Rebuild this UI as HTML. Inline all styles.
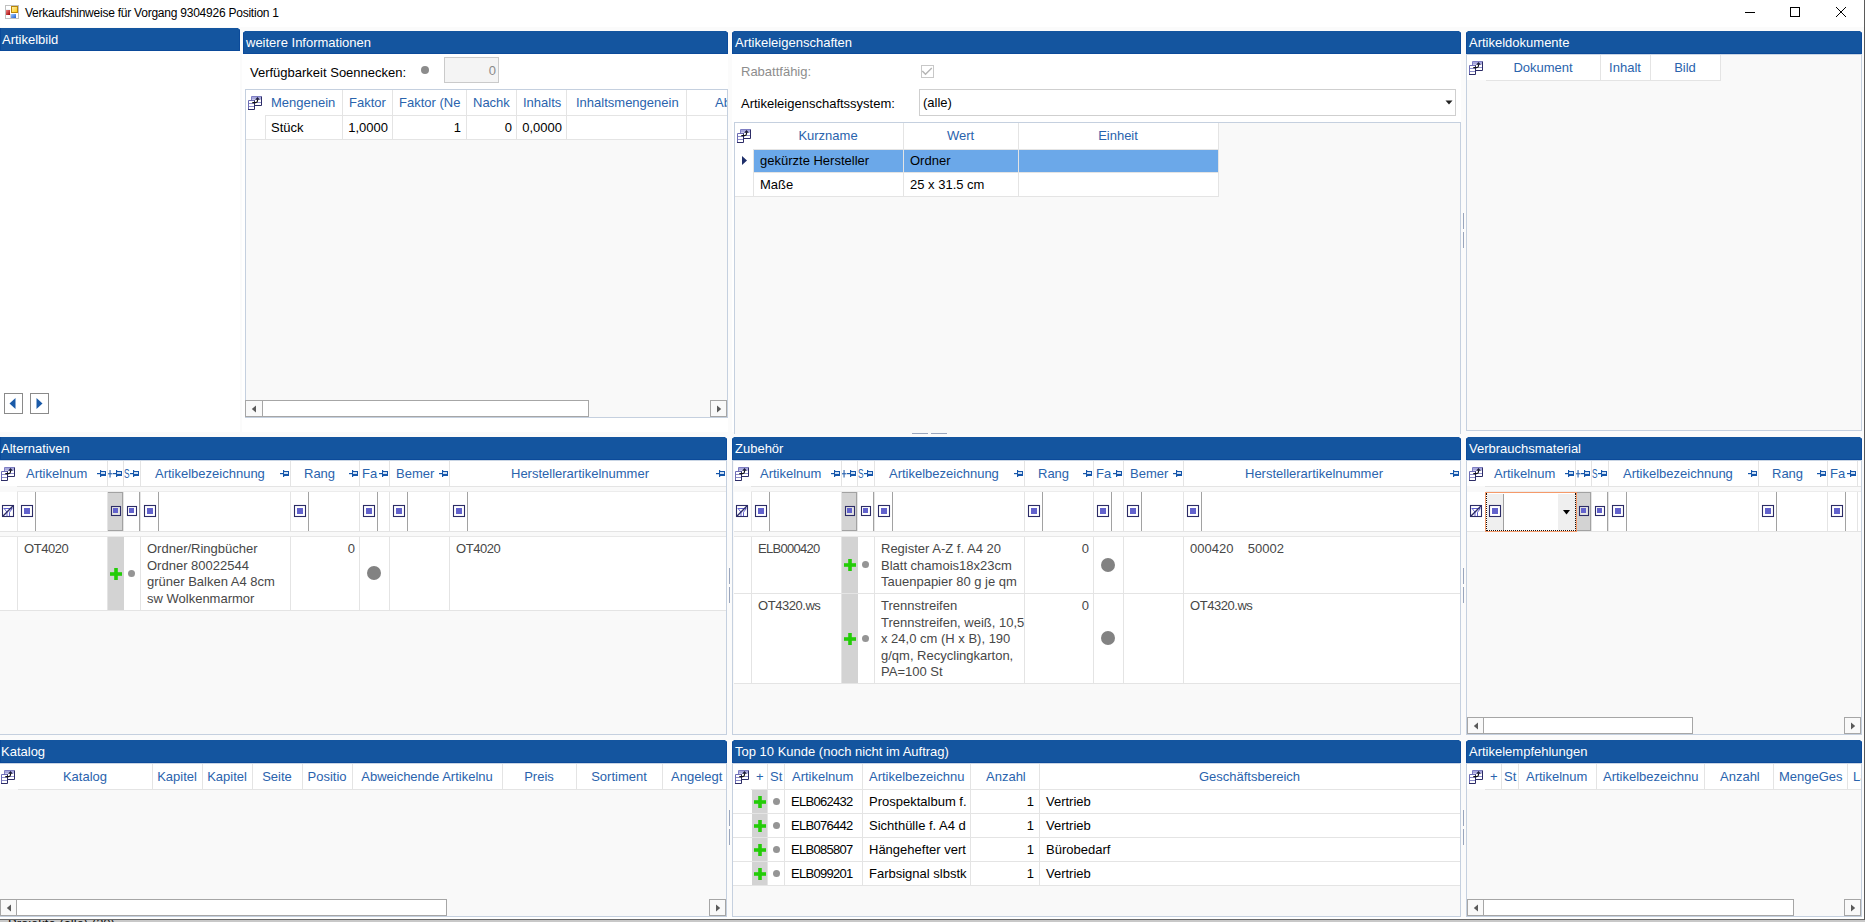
<!DOCTYPE html><html><head><meta charset="utf-8"><style>
html,body{margin:0;padding:0;width:1865px;height:922px;overflow:hidden;background:#fff;position:relative}
.a{position:absolute;box-sizing:content-box}
svg.a{overflow:visible}
.t{position:absolute;font-family:"Liberation Sans",sans-serif;font-size:13px;line-height:16px;white-space:pre}
</style></head><body>
<svg class="a" style="left:5px;top:5px" width="15" height="15" viewBox="0 0 15 15"><defs><linearGradient id="gy" x1="0" y1="0" x2="1" y2="1"><stop offset="0" stop-color="#fff4c0"/><stop offset="1" stop-color="#ffc800"/></linearGradient><linearGradient id="gr" x1="0" y1="0" x2="1" y2="1"><stop offset="0" stop-color="#f08080"/><stop offset="1" stop-color="#a00000"/></linearGradient><linearGradient id="gb" x1="0" y1="0" x2="1" y2="1"><stop offset="0" stop-color="#a0c8ff"/><stop offset="1" stop-color="#2060d0"/></linearGradient></defs><rect x="0.5" y="0.5" width="13" height="13" fill="#fff" stroke="#c0c0c0"/><line x1="5.5" y1="9" x2="5.5" y2="13" stroke="#d8d8d8"/><line x1="1" y1="5" x2="5" y2="5" stroke="#dde4ea"/><rect x="6.5" y="1.5" width="6" height="6" fill="url(#gy)" stroke="#b8860b"/><rect x="1" y="5" width="4" height="5" fill="url(#gr)"/><rect x="6" y="9" width="5" height="4" fill="url(#gb)"/></svg>
<div class="t" style="left:25px;top:5px;color:#000;font-size:12px;letter-spacing:-0.235px">Verkaufshinweise für Vorgang 9304926 Position 1</div>
<div class="a" style="left:1745px;top:12px;width:10px;height:1px;background:#000;"></div>
<div class="a" style="left:1790px;top:7px;width:8px;height:8px;border:1px solid #000"></div>
<svg class="a" style="left:1835px;top:6px" width="12" height="12" viewBox="0 0 12 12"><path d="M1 1 L11 11 M11 1 L1 11" stroke="#000" stroke-width="1"/></svg>
<div class="a" style="left:0px;top:27px;width:1865px;height:895px;background:#fbfbfb;"></div>
<div class="a" style="left:0px;top:51px;width:240px;height:381px;background:#fff;"></div>
<div class="a" style="left:0px;top:28px;width:240px;height:23px;background:#14559f;box-shadow:inset 0 -1px 0 #0b4a9a, inset 1px 0 0 #0b4a9a, inset -1px 0 0 #0b4a9a;clip-path:polygon(0 0,calc(100% - 2px) 0,100% 2px,100% 100%,0 100%)"></div>
<div class="t" style="left:2px;top:32px;color:#fff;font-size:13px;">Artikelbild</div>
<div class="a" style="left:4px;top:393px;width:17px;height:19px;border:1px solid #8a8a8a;background:#fff;"></div>
<div class="a" style="left:30px;top:393px;width:17px;height:19px;border:1px solid #8a8a8a;background:#fff;"></div>
<svg class="a" style="left:9px;top:398px" width="7" height="12" viewBox="0 0 7 12"><path d="M6.5 0 L6.5 11 L0.5 5.5 Z" fill="#1a5aa8"/></svg>
<svg class="a" style="left:36px;top:398px" width="7" height="12" viewBox="0 0 7 12"><path d="M0.5 0 L0.5 11 L6.5 5.5 Z" fill="#1a5aa8"/></svg>
<div class="a" style="left:242px;top:54px;width:486px;height:378px;background:#fff;"></div>
<div class="a" style="left:243px;top:31px;width:485px;height:23px;background:#14559f;box-shadow:inset 0 -1px 0 #0b4a9a, inset 1px 0 0 #0b4a9a, inset -1px 0 0 #0b4a9a;clip-path:polygon(2px 0,calc(100% - 2px) 0,100% 2px,100% 100%,0 100%,0 2px)"></div>
<div class="t" style="left:246px;top:35px;color:#fff;font-size:13px;">weitere Informationen</div>
<div class="t" style="left:250px;top:65px;color:#000;font-size:13px;">Verfügbarkeit Soennecken:</div>
<div class="a" style="left:421px;top:66px;width:8px;height:8px;border-radius:50%;background:#8c8c8c"></div>
<div class="a" style="left:444px;top:57px;width:53px;height:24px;border:1px solid #cacaca;background:#f4f4f4;"></div>
<div class="t" style="right:1369px;top:63px;color:#8a8a8a;font-size:13px;text-align:right;">0</div>
<div class="a" style="left:245px;top:89px;width:481px;height:327px;border:1px solid #c5d0df;background:#f9f9f9;"></div>
<div class="a" style="left:246px;top:90px;width:481px;height:25px;background:#fff;"></div>
<div class="a" style="left:246px;top:115px;width:481px;height:24px;background:#fff;"></div>
<div class="a" style="left:265px;top:115px;width:462px;height:1px;background:#e4e4e4;"></div>
<div class="a" style="left:246px;top:139px;width:481px;height:1px;background:#e4e4e4;"></div>
<div class="a" style="left:342px;top:90px;width:1px;height:49px;background:#e4e4e4;"></div>
<div class="a" style="left:392px;top:90px;width:1px;height:49px;background:#e4e4e4;"></div>
<div class="a" style="left:466px;top:90px;width:1px;height:49px;background:#e4e4e4;"></div>
<div class="a" style="left:516px;top:90px;width:1px;height:49px;background:#e4e4e4;"></div>
<div class="a" style="left:566px;top:90px;width:1px;height:49px;background:#e4e4e4;"></div>
<div class="a" style="left:686px;top:90px;width:1px;height:49px;background:#e4e4e4;"></div>
<div class="a" style="left:265px;top:115px;width:1px;height:24px;background:#e4e4e4;"></div>
<svg class="a" style="left:248px;top:96px" width="15" height="15" viewBox="0 0 15 15"><rect x="3" y="0" width="11" height="10" fill="#fff"/><rect x="4" y="1" width="9" height="2.6" fill="#a8a8dc"/><path d="M3.5 10 V0.5 H13.5" fill="none" stroke="#7d7dc2"/><path d="M13.5 0.5 V9.5 H3" fill="none" stroke="#2c2c66"/><line x1="4" y1="6.5" x2="13" y2="6.5" stroke="#9292d2"/><rect x="0" y="4" width="7" height="10" fill="#fff"/><path d="M0.5 14 V4.5 H7" fill="none" stroke="#6c6cb4"/><path d="M6.5 4.5 V13.5 H0" fill="none" stroke="#2c2c66"/><line x1="1" y1="7.5" x2="6" y2="7.5" stroke="#8c8cc8"/><line x1="1" y1="10.5" x2="6" y2="10.5" stroke="#8c8cc8"/><path d="M4.3 6.6 H7.6 Q9.5 6.6 9.5 4.8 V3.2" fill="none" stroke="#111" stroke-width="1.15"/><path d="M7.1 3.7 L9.5 0.9 L11.9 3.7 Z" fill="#1a1a3a"/></svg>
<div class="t" style="left:271px;top:95px;color:#2a63ad;font-size:13px;">Mengenein</div>
<div class="t" style="left:349px;top:95px;color:#2a63ad;font-size:13px;">Faktor</div>
<div class="t" style="left:399px;top:95px;color:#2a63ad;font-size:13px;">Faktor (Ne</div>
<div class="t" style="left:473px;top:95px;color:#2a63ad;font-size:13px;">Nachk</div>
<div class="t" style="left:523px;top:95px;color:#2a63ad;font-size:13px;">Inhalts</div>
<div class="t" style="left:576px;top:95px;color:#2a63ad;font-size:13px;">Inhaltsmengenein</div>
<div class="a" style="left:687px;top:90px;width:40px;height:25px;overflow:hidden"><div class="t" style="left:28px;top:5px;color:#2a63ad">Abmessung</div></div>
<div class="t" style="left:271px;top:120px;color:#000;font-size:13px;">Stück</div>
<div class="t" style="right:1477px;top:120px;color:#000;font-size:13px;text-align:right;">1,0000</div>
<div class="t" style="right:1404px;top:120px;color:#000;font-size:13px;text-align:right;">1</div>
<div class="t" style="right:1353px;top:120px;color:#000;font-size:13px;text-align:right;">0</div>
<div class="t" style="right:1303px;top:120px;color:#000;font-size:13px;text-align:right;">0,0000</div>
<div class="a" style="left:245px;top:400px;width:16px;height:15px;border:1px solid #a6a6a6;background:#f9f9f9;"></div>
<svg class="a" style="left:251.0px;top:404.5px" width="6" height="8" viewBox="0 0 6 8"><path d="M5 0.5 L5 7.5 L0.8 4 Z" fill="#5a5a5a"/></svg>
<div class="a" style="left:262px;top:400px;width:325px;height:15px;border:1px solid #a6a6a6;background:#fff;"></div>
<div class="a" style="left:710px;top:400px;width:15px;height:15px;border:1px solid #a6a6a6;background:#f9f9f9;"></div>
<svg class="a" style="left:715.5px;top:404.5px" width="6" height="8" viewBox="0 0 6 8"><path d="M1 0.5 L1 7.5 L5.2 4 Z" fill="#5a5a5a"/></svg>
<div class="a" style="left:732px;top:54px;width:729px;height:378px;background:#fff;"></div>
<div class="a" style="left:732px;top:31px;width:729px;height:23px;background:#14559f;box-shadow:inset 0 -1px 0 #0b4a9a, inset 1px 0 0 #0b4a9a, inset -1px 0 0 #0b4a9a;clip-path:polygon(2px 0,calc(100% - 2px) 0,100% 2px,100% 100%,0 100%,0 2px)"></div>
<div class="t" style="left:735px;top:35px;color:#fff;font-size:13px;">Artikeleigenschaften</div>
<div class="t" style="left:741px;top:64px;color:#8d8d8d;font-size:13px;">Rabattfähig:</div>
<div class="a" style="left:921px;top:65px;width:11px;height:11px;border:1px solid #c8c8c8;background:#fff;"></div>
<svg class="a" style="left:922px;top:66px" width="11" height="11" viewBox="0 0 11 11"><path d="M0.3 5 L3.5 8.3 L9.8 2" fill="none" stroke="#b4b4b4" stroke-width="1.4"/></svg>
<div class="t" style="left:741px;top:96px;color:#000;font-size:13px;">Artikeleigenschaftssystem:</div>
<div class="a" style="left:919px;top:89px;width:535px;height:25px;border:1px solid #cfcfcf;background:#fff;"></div>
<div class="t" style="left:923px;top:95px;color:#000;font-size:13px;">(alle)</div>
<svg class="a" style="left:1445px;top:100px" width="8" height="5" viewBox="0 0 8 5"><path d="M0.5 0.5 L7.5 0.5 L4 4.5 Z" fill="#222"/></svg>
<div class="a" style="left:734px;top:122px;width:725px;height:311px;border:1px solid #c5d0df;border-bottom:none;background:#f9f9f9"></div>
<div class="a" style="left:735px;top:123px;width:484px;height:26px;background:#fff;"></div>
<div class="a" style="left:735px;top:149px;width:484px;height:47px;background:#fff;"></div>
<div class="a" style="left:754px;top:150px;width:149px;height:22px;background:#6ba8e9;"></div>
<div class="a" style="left:904px;top:150px;width:114px;height:22px;background:#6ba8e9;"></div>
<div class="a" style="left:1019px;top:150px;width:199px;height:22px;background:#6ba8e9;"></div>
<div class="a" style="left:753px;top:149px;width:466px;height:1px;background:#e4e4e4;"></div>
<div class="a" style="left:753px;top:172px;width:466px;height:1px;background:#e4e4e4;"></div>
<div class="a" style="left:735px;top:196px;width:484px;height:1px;background:#e4e4e4;"></div>
<div class="a" style="left:753px;top:149px;width:1px;height:47px;background:#e4e4e4;"></div>
<div class="a" style="left:903px;top:123px;width:1px;height:73px;background:#e4e4e4;"></div>
<div class="a" style="left:1018px;top:123px;width:1px;height:73px;background:#e4e4e4;"></div>
<div class="a" style="left:1218px;top:123px;width:1px;height:74px;background:#e4e4e4;"></div>
<svg class="a" style="left:737px;top:129px" width="15" height="15" viewBox="0 0 15 15"><rect x="3" y="0" width="11" height="10" fill="#fff"/><rect x="4" y="1" width="9" height="2.6" fill="#a8a8dc"/><path d="M3.5 10 V0.5 H13.5" fill="none" stroke="#7d7dc2"/><path d="M13.5 0.5 V9.5 H3" fill="none" stroke="#2c2c66"/><line x1="4" y1="6.5" x2="13" y2="6.5" stroke="#9292d2"/><rect x="0" y="4" width="7" height="10" fill="#fff"/><path d="M0.5 14 V4.5 H7" fill="none" stroke="#6c6cb4"/><path d="M6.5 4.5 V13.5 H0" fill="none" stroke="#2c2c66"/><line x1="1" y1="7.5" x2="6" y2="7.5" stroke="#8c8cc8"/><line x1="1" y1="10.5" x2="6" y2="10.5" stroke="#8c8cc8"/><path d="M4.3 6.6 H7.6 Q9.5 6.6 9.5 4.8 V3.2" fill="none" stroke="#111" stroke-width="1.15"/><path d="M7.1 3.7 L9.5 0.9 L11.9 3.7 Z" fill="#1a1a3a"/></svg>
<div class="t" style="left:753px;width:150px;top:128px;color:#2a63ad;font-size:13px;text-align:center;">Kurzname</div>
<div class="t" style="left:903px;width:115px;top:128px;color:#2a63ad;font-size:13px;text-align:center;">Wert</div>
<div class="t" style="left:1018px;width:200px;top:128px;color:#2a63ad;font-size:13px;text-align:center;">Einheit</div>
<svg class="a" style="left:741px;top:156px" width="7" height="10" viewBox="0 0 7 10"><path d="M1 0 L1 9 L6 4.5 Z" fill="#1f2f6a"/></svg>
<div class="t" style="left:760px;top:153px;color:#000;font-size:13px;">gekürzte Hersteller</div>
<div class="t" style="left:910px;top:153px;color:#000;font-size:13px;">Ordner</div>
<div class="t" style="left:760px;top:177px;color:#000;font-size:13px;">Maße</div>
<div class="t" style="left:910px;top:177px;color:#000;font-size:13px;">25 x 31.5 cm</div>
<div class="a" style="left:912px;top:433px;width:16px;height:1px;background:#9aa6bd;"></div>
<div class="a" style="left:931px;top:433px;width:16px;height:1px;background:#9aa6bd;"></div>
<div class="a" style="left:1466px;top:54px;width:394px;height:376px;border:1px solid #c5d0df;border-top:none;background:#f9f9f9"></div>
<div class="a" style="left:1466px;top:31px;width:396px;height:23px;background:#14559f;box-shadow:inset 0 -1px 0 #0b4a9a, inset 1px 0 0 #0b4a9a, inset -1px 0 0 #0b4a9a;clip-path:polygon(2px 0,calc(100% - 2px) 0,100% 2px,100% 100%,0 100%,0 2px)"></div>
<div class="t" style="left:1469px;top:35px;color:#fff;font-size:13px;">Artikeldokumente</div>
<div class="a" style="left:1467px;top:54px;width:253px;height:26px;background:#fff;"></div>
<div class="a" style="left:1486px;top:80px;width:235px;height:1px;background:#e4e4e4;"></div>
<div class="a" style="left:1600px;top:54px;width:1px;height:26px;background:#e4e4e4;"></div>
<div class="a" style="left:1650px;top:54px;width:1px;height:26px;background:#e4e4e4;"></div>
<div class="a" style="left:1720px;top:54px;width:1px;height:27px;background:#e4e4e4;"></div>
<svg class="a" style="left:1469px;top:61px" width="15" height="15" viewBox="0 0 15 15"><rect x="3" y="0" width="11" height="10" fill="#fff"/><rect x="4" y="1" width="9" height="2.6" fill="#a8a8dc"/><path d="M3.5 10 V0.5 H13.5" fill="none" stroke="#7d7dc2"/><path d="M13.5 0.5 V9.5 H3" fill="none" stroke="#2c2c66"/><line x1="4" y1="6.5" x2="13" y2="6.5" stroke="#9292d2"/><rect x="0" y="4" width="7" height="10" fill="#fff"/><path d="M0.5 14 V4.5 H7" fill="none" stroke="#6c6cb4"/><path d="M6.5 4.5 V13.5 H0" fill="none" stroke="#2c2c66"/><line x1="1" y1="7.5" x2="6" y2="7.5" stroke="#8c8cc8"/><line x1="1" y1="10.5" x2="6" y2="10.5" stroke="#8c8cc8"/><path d="M4.3 6.6 H7.6 Q9.5 6.6 9.5 4.8 V3.2" fill="none" stroke="#111" stroke-width="1.15"/><path d="M7.1 3.7 L9.5 0.9 L11.9 3.7 Z" fill="#1a1a3a"/></svg>
<div class="t" style="left:1486px;width:114px;top:60px;color:#2a63ad;font-size:13px;text-align:center;">Dokument</div>
<div class="t" style="left:1600px;width:50px;top:60px;color:#2a63ad;font-size:13px;text-align:center;">Inhalt</div>
<div class="t" style="left:1650px;width:70px;top:60px;color:#2a63ad;font-size:13px;text-align:center;">Bild</div>
<div class="a" style="left:0px;top:437px;width:727px;height:23px;background:#14559f;box-shadow:inset 0 -1px 0 #0b4a9a, inset 1px 0 0 #0b4a9a, inset -1px 0 0 #0b4a9a;clip-path:polygon(0 0,calc(100% - 2px) 0,100% 2px,100% 100%,0 100%)"></div>
<div class="t" style="left:1px;top:441px;color:#fff;font-size:13px;">Alternativen</div>
<div class="a" style="left:-1px;top:460px;width:726px;height:274px;border:1px solid #c5d0df;border-top:none;background:#f9f9f9"></div>
<div class="a" style="left:0px;top:460px;width:726px;height:26px;background:#fff;"></div>
<div class="a" style="left:17px;top:486px;width:709px;height:1px;background:#e4e4e4;"></div>
<div class="a" style="left:107px;top:460px;width:1px;height:26px;background:#e4e4e4;"></div>
<div class="a" style="left:123px;top:460px;width:1px;height:26px;background:#e4e4e4;"></div>
<div class="a" style="left:140px;top:460px;width:1px;height:26px;background:#e4e4e4;"></div>
<div class="a" style="left:290px;top:460px;width:1px;height:26px;background:#e4e4e4;"></div>
<div class="a" style="left:359px;top:460px;width:1px;height:26px;background:#e4e4e4;"></div>
<div class="a" style="left:389px;top:460px;width:1px;height:26px;background:#e4e4e4;"></div>
<div class="a" style="left:449px;top:460px;width:1px;height:26px;background:#e4e4e4;"></div>
<svg class="a" style="left:1px;top:467px" width="15" height="15" viewBox="0 0 15 15"><rect x="3" y="0" width="11" height="10" fill="#fff"/><rect x="4" y="1" width="9" height="2.6" fill="#a8a8dc"/><path d="M3.5 10 V0.5 H13.5" fill="none" stroke="#7d7dc2"/><path d="M13.5 0.5 V9.5 H3" fill="none" stroke="#2c2c66"/><line x1="4" y1="6.5" x2="13" y2="6.5" stroke="#9292d2"/><rect x="0" y="4" width="7" height="10" fill="#fff"/><path d="M0.5 14 V4.5 H7" fill="none" stroke="#6c6cb4"/><path d="M6.5 4.5 V13.5 H0" fill="none" stroke="#2c2c66"/><line x1="1" y1="7.5" x2="6" y2="7.5" stroke="#8c8cc8"/><line x1="1" y1="10.5" x2="6" y2="10.5" stroke="#8c8cc8"/><path d="M4.3 6.6 H7.6 Q9.5 6.6 9.5 4.8 V3.2" fill="none" stroke="#111" stroke-width="1.15"/><path d="M7.1 3.7 L9.5 0.9 L11.9 3.7 Z" fill="#1a1a3a"/></svg>
<div class="t" style="left:26px;top:466px;color:#2a63ad;font-size:13px;">Artikelnum</div>
<svg class="a" style="left:97px;top:470px" width="10" height="8" viewBox="0 0 10 8"><rect x="0" y="3" width="3" height="1.2" fill="#1556aa"/><rect x="3" y="0" width="1.2" height="7" fill="#1556aa"/><rect x="4" y="1" width="5" height="1" fill="#1556aa"/><rect x="4" y="2" width="4" height="2" fill="#cfe0f4"/><rect x="4" y="4" width="5" height="2" fill="#1556aa"/><rect x="8" y="1" width="1" height="5" fill="#1556aa"/></svg>
<svg class="a" style="left:108px;top:470px" width="5" height="8" viewBox="0 0 5 8"><rect x="1.5" y="0" width="1.1" height="7.5" fill="#2a63ad"/><rect x="0" y="3.2" width="4.5" height="1.1" fill="#2a63ad"/></svg>
<svg class="a" style="left:113px;top:470px" width="10" height="8" viewBox="0 0 10 8"><rect x="0" y="3" width="3" height="1.2" fill="#1556aa"/><rect x="3" y="0" width="1.2" height="7" fill="#1556aa"/><rect x="4" y="1" width="5" height="1" fill="#1556aa"/><rect x="4" y="2" width="4" height="2" fill="#cfe0f4"/><rect x="4" y="4" width="5" height="2" fill="#1556aa"/><rect x="8" y="1" width="1" height="5" fill="#1556aa"/></svg>
<div class="t" style="left:124px;top:466px;color:#2a63ad;transform:scaleX(0.64);transform-origin:0 0">S</div>
<svg class="a" style="left:130px;top:470px" width="10" height="8" viewBox="0 0 10 8"><rect x="0" y="3" width="3" height="1.2" fill="#1556aa"/><rect x="3" y="0" width="1.2" height="7" fill="#1556aa"/><rect x="4" y="1" width="5" height="1" fill="#1556aa"/><rect x="4" y="2" width="4" height="2" fill="#cfe0f4"/><rect x="4" y="4" width="5" height="2" fill="#1556aa"/><rect x="8" y="1" width="1" height="5" fill="#1556aa"/></svg>
<div class="t" style="left:155px;top:466px;color:#2a63ad;font-size:13px;">Artikelbezeichnung</div>
<svg class="a" style="left:280px;top:470px" width="10" height="8" viewBox="0 0 10 8"><rect x="0" y="3" width="3" height="1.2" fill="#1556aa"/><rect x="3" y="0" width="1.2" height="7" fill="#1556aa"/><rect x="4" y="1" width="5" height="1" fill="#1556aa"/><rect x="4" y="2" width="4" height="2" fill="#cfe0f4"/><rect x="4" y="4" width="5" height="2" fill="#1556aa"/><rect x="8" y="1" width="1" height="5" fill="#1556aa"/></svg>
<div class="t" style="left:304px;top:466px;color:#2a63ad;font-size:13px;">Rang</div>
<svg class="a" style="left:349px;top:470px" width="10" height="8" viewBox="0 0 10 8"><rect x="0" y="3" width="3" height="1.2" fill="#1556aa"/><rect x="3" y="0" width="1.2" height="7" fill="#1556aa"/><rect x="4" y="1" width="5" height="1" fill="#1556aa"/><rect x="4" y="2" width="4" height="2" fill="#cfe0f4"/><rect x="4" y="4" width="5" height="2" fill="#1556aa"/><rect x="8" y="1" width="1" height="5" fill="#1556aa"/></svg>
<div class="t" style="left:362px;top:466px;color:#2a63ad;font-size:13px;">Fa</div>
<svg class="a" style="left:379px;top:470px" width="10" height="8" viewBox="0 0 10 8"><rect x="0" y="3" width="3" height="1.2" fill="#1556aa"/><rect x="3" y="0" width="1.2" height="7" fill="#1556aa"/><rect x="4" y="1" width="5" height="1" fill="#1556aa"/><rect x="4" y="2" width="4" height="2" fill="#cfe0f4"/><rect x="4" y="4" width="5" height="2" fill="#1556aa"/><rect x="8" y="1" width="1" height="5" fill="#1556aa"/></svg>
<div class="t" style="left:396px;top:466px;color:#2a63ad;font-size:13px;">Bemer</div>
<svg class="a" style="left:439px;top:470px" width="10" height="8" viewBox="0 0 10 8"><rect x="0" y="3" width="3" height="1.2" fill="#1556aa"/><rect x="3" y="0" width="1.2" height="7" fill="#1556aa"/><rect x="4" y="1" width="5" height="1" fill="#1556aa"/><rect x="4" y="2" width="4" height="2" fill="#cfe0f4"/><rect x="4" y="4" width="5" height="2" fill="#1556aa"/><rect x="8" y="1" width="1" height="5" fill="#1556aa"/></svg>
<div class="t" style="left:511px;top:466px;color:#2a63ad;font-size:13px;">Herstellerartikelnummer</div>
<svg class="a" style="left:716px;top:470px" width="10" height="8" viewBox="0 0 10 8"><rect x="0" y="3" width="3" height="1.2" fill="#1556aa"/><rect x="3" y="0" width="1.2" height="7" fill="#1556aa"/><rect x="4" y="1" width="5" height="1" fill="#1556aa"/><rect x="4" y="2" width="4" height="2" fill="#cfe0f4"/><rect x="4" y="4" width="5" height="2" fill="#1556aa"/><rect x="8" y="1" width="1" height="5" fill="#1556aa"/></svg>
<div class="a" style="left:0px;top:487px;width:726px;height:5px;background:#f9f9f9;"></div>
<div class="a" style="left:0px;top:492px;width:726px;height:39px;background:#fff;"></div>
<div class="a" style="left:17px;top:491px;width:709px;height:1px;background:#ececec;"></div>
<div class="a" style="left:0px;top:531px;width:726px;height:1px;background:#e4e4e4;"></div>
<div class="a" style="left:17px;top:492px;width:1px;height:39px;background:#e4e4e4;"></div>
<div class="a" style="left:107px;top:492px;width:1px;height:39px;background:#e4e4e4;"></div>
<div class="a" style="left:123px;top:492px;width:1px;height:39px;background:#e4e4e4;"></div>
<div class="a" style="left:140px;top:492px;width:1px;height:39px;background:#e4e4e4;"></div>
<div class="a" style="left:290px;top:492px;width:1px;height:39px;background:#e4e4e4;"></div>
<div class="a" style="left:359px;top:492px;width:1px;height:39px;background:#e4e4e4;"></div>
<div class="a" style="left:389px;top:492px;width:1px;height:39px;background:#e4e4e4;"></div>
<div class="a" style="left:449px;top:492px;width:1px;height:39px;background:#e4e4e4;"></div>
<div class="a" style="left:0px;top:532px;width:726px;height:4px;background:#f9f9f9;"></div>
<div class="a" style="left:0px;top:536px;width:726px;height:1px;background:#e8e8e8;"></div>
<svg class="a" style="left:2px;top:505px" width="12" height="12" viewBox="0 0 12 12"><rect x="0.5" y="0.5" width="11" height="11" fill="#fff" stroke="#2c2c66" stroke-width="1.1"/><path d="M1.5 3.5 H10.5 M2.5 4 L5 7.2 V11 M10 4 L7.5 7.2 V11" fill="none" stroke="#6060d0" stroke-width="1"/><line x1="0.8" y1="11.2" x2="11.2" y2="0.8" stroke="#2c2c66" stroke-width="1.4"/></svg>
<svg class="a" style="left:21px;top:505px" width="12" height="12" viewBox="0 0 12 12"><rect x="0.5" y="0.5" width="11" height="11" fill="#fff" stroke="#2c2c66" stroke-width="1.1"/><rect x="3" y="3" width="6" height="6" fill="#6262cc"/></svg>
<div class="a" style="left:35px;top:492px;width:1px;height:39px;background:#a2a2a2;"></div>
<div class="a" style="left:108px;top:492px;width:15px;height:39px;background:#d3d3d3;"></div>
<div class="a" style="left:108px;top:492px;width:15px;height:1px;background:#a2a2a2;"></div>
<div class="a" style="left:108px;top:530px;width:15px;height:1px;background:#a2a2a2;"></div>
<div class="a" style="left:122px;top:492px;width:1px;height:39px;background:#a2a2a2;"></div>
<svg class="a" style="left:111px;top:506px" width="10" height="10" viewBox="0 0 10 10"><rect x="0.5" y="0.5" width="9" height="9" fill="#e4e4e4" stroke="#2c2c66" stroke-width="1.1"/><rect x="2" y="2" width="5" height="5" fill="#6262cc"/></svg>
<svg class="a" style="left:127px;top:506px" width="10" height="10" viewBox="0 0 10 10"><rect x="0.5" y="0.5" width="9" height="9" fill="#fff" stroke="#2c2c66" stroke-width="1.1"/><rect x="2" y="2" width="5" height="5" fill="#6262cc"/></svg>
<div class="a" style="left:139px;top:492px;width:1px;height:39px;background:#a2a2a2;"></div>
<svg class="a" style="left:144px;top:505px" width="12" height="12" viewBox="0 0 12 12"><rect x="0.5" y="0.5" width="11" height="11" fill="#fff" stroke="#2c2c66" stroke-width="1.1"/><rect x="3" y="3" width="6" height="6" fill="#6262cc"/></svg>
<div class="a" style="left:158px;top:492px;width:1px;height:39px;background:#a2a2a2;"></div>
<svg class="a" style="left:294px;top:505px" width="12" height="12" viewBox="0 0 12 12"><rect x="0.5" y="0.5" width="11" height="11" fill="#fff" stroke="#2c2c66" stroke-width="1.1"/><rect x="3" y="3" width="6" height="6" fill="#6262cc"/></svg>
<div class="a" style="left:308px;top:492px;width:1px;height:39px;background:#a2a2a2;"></div>
<svg class="a" style="left:363px;top:505px" width="12" height="12" viewBox="0 0 12 12"><rect x="0.5" y="0.5" width="11" height="11" fill="#fff" stroke="#2c2c66" stroke-width="1.1"/><rect x="3" y="3" width="6" height="6" fill="#6262cc"/></svg>
<div class="a" style="left:377px;top:492px;width:1px;height:39px;background:#a2a2a2;"></div>
<svg class="a" style="left:393px;top:505px" width="12" height="12" viewBox="0 0 12 12"><rect x="0.5" y="0.5" width="11" height="11" fill="#fff" stroke="#2c2c66" stroke-width="1.1"/><rect x="3" y="3" width="6" height="6" fill="#6262cc"/></svg>
<div class="a" style="left:407px;top:492px;width:1px;height:39px;background:#a2a2a2;"></div>
<svg class="a" style="left:453px;top:505px" width="12" height="12" viewBox="0 0 12 12"><rect x="0.5" y="0.5" width="11" height="11" fill="#fff" stroke="#2c2c66" stroke-width="1.1"/><rect x="3" y="3" width="6" height="6" fill="#6262cc"/></svg>
<div class="a" style="left:467px;top:492px;width:1px;height:39px;background:#a2a2a2;"></div>
<div class="a" style="left:0px;top:537px;width:726px;height:73px;background:#fff;"></div>
<div class="a" style="left:0px;top:610px;width:726px;height:1px;background:#e4e4e4;"></div>
<div class="a" style="left:17px;top:537px;width:1px;height:73px;background:#e4e4e4;"></div>
<div class="a" style="left:107px;top:537px;width:1px;height:73px;background:#e4e4e4;"></div>
<div class="a" style="left:123px;top:537px;width:1px;height:73px;background:#e4e4e4;"></div>
<div class="a" style="left:140px;top:537px;width:1px;height:73px;background:#e4e4e4;"></div>
<div class="a" style="left:290px;top:537px;width:1px;height:73px;background:#e4e4e4;"></div>
<div class="a" style="left:359px;top:537px;width:1px;height:73px;background:#e4e4e4;"></div>
<div class="a" style="left:389px;top:537px;width:1px;height:73px;background:#e4e4e4;"></div>
<div class="a" style="left:449px;top:537px;width:1px;height:73px;background:#e4e4e4;"></div>
<div class="a" style="left:108px;top:537px;width:16px;height:73px;background:#d3d3d3;"></div>
<div class="t" style="left:24px;top:541px;color:#474747;font-size:13px;letter-spacing:-0.45px">OT4020</div>
<svg class="a" style="left:110px;top:568px" width="12" height="12" viewBox="0 0 12 12"><rect x="4.2" y="0" width="3.6" height="12" fill="#24cc08"/><rect x="0" y="4.2" width="12" height="3.6" fill="#24cc08"/></svg>
<div class="a" style="left:128.0px;top:569.9px;width:7.0px;height:7.0px;border-radius:50%;background:#959595"></div>
<div class="t" style="left:147px;top:541px;color:#474747;line-height:16.5px">Ordner/Ringbücher<br>Ordner 80022544<br>grüner Balken A4 8cm<br>sw Wolkenmarmor</div>
<div class="t" style="right:1510px;top:541px;color:#474747;font-size:13px;text-align:right;">0</div>
<div class="a" style="left:367.0px;top:566.0px;width:14px;height:14px;border-radius:50%;background:#828282"></div>
<div class="t" style="left:456px;top:541px;color:#474747;font-size:13px;letter-spacing:-0.45px">OT4020</div>
<div class="a" style="left:732px;top:437px;width:729px;height:23px;background:#14559f;box-shadow:inset 0 -1px 0 #0b4a9a, inset 1px 0 0 #0b4a9a, inset -1px 0 0 #0b4a9a;clip-path:polygon(2px 0,calc(100% - 2px) 0,100% 2px,100% 100%,0 100%,0 2px)"></div>
<div class="t" style="left:735px;top:441px;color:#fff;font-size:13px;">Zubehör</div>
<div class="a" style="left:732px;top:460px;width:727px;height:274px;border:1px solid #c5d0df;border-top:none;background:#f9f9f9"></div>
<div class="a" style="left:734px;top:460px;width:726px;height:26px;background:#fff;"></div>
<div class="a" style="left:751px;top:486px;width:709px;height:1px;background:#e4e4e4;"></div>
<div class="a" style="left:841px;top:460px;width:1px;height:26px;background:#e4e4e4;"></div>
<div class="a" style="left:857px;top:460px;width:1px;height:26px;background:#e4e4e4;"></div>
<div class="a" style="left:874px;top:460px;width:1px;height:26px;background:#e4e4e4;"></div>
<div class="a" style="left:1024px;top:460px;width:1px;height:26px;background:#e4e4e4;"></div>
<div class="a" style="left:1093px;top:460px;width:1px;height:26px;background:#e4e4e4;"></div>
<div class="a" style="left:1123px;top:460px;width:1px;height:26px;background:#e4e4e4;"></div>
<div class="a" style="left:1183px;top:460px;width:1px;height:26px;background:#e4e4e4;"></div>
<svg class="a" style="left:735px;top:467px" width="15" height="15" viewBox="0 0 15 15"><rect x="3" y="0" width="11" height="10" fill="#fff"/><rect x="4" y="1" width="9" height="2.6" fill="#a8a8dc"/><path d="M3.5 10 V0.5 H13.5" fill="none" stroke="#7d7dc2"/><path d="M13.5 0.5 V9.5 H3" fill="none" stroke="#2c2c66"/><line x1="4" y1="6.5" x2="13" y2="6.5" stroke="#9292d2"/><rect x="0" y="4" width="7" height="10" fill="#fff"/><path d="M0.5 14 V4.5 H7" fill="none" stroke="#6c6cb4"/><path d="M6.5 4.5 V13.5 H0" fill="none" stroke="#2c2c66"/><line x1="1" y1="7.5" x2="6" y2="7.5" stroke="#8c8cc8"/><line x1="1" y1="10.5" x2="6" y2="10.5" stroke="#8c8cc8"/><path d="M4.3 6.6 H7.6 Q9.5 6.6 9.5 4.8 V3.2" fill="none" stroke="#111" stroke-width="1.15"/><path d="M7.1 3.7 L9.5 0.9 L11.9 3.7 Z" fill="#1a1a3a"/></svg>
<div class="t" style="left:760px;top:466px;color:#2a63ad;font-size:13px;">Artikelnum</div>
<svg class="a" style="left:831px;top:470px" width="10" height="8" viewBox="0 0 10 8"><rect x="0" y="3" width="3" height="1.2" fill="#1556aa"/><rect x="3" y="0" width="1.2" height="7" fill="#1556aa"/><rect x="4" y="1" width="5" height="1" fill="#1556aa"/><rect x="4" y="2" width="4" height="2" fill="#cfe0f4"/><rect x="4" y="4" width="5" height="2" fill="#1556aa"/><rect x="8" y="1" width="1" height="5" fill="#1556aa"/></svg>
<svg class="a" style="left:842px;top:470px" width="5" height="8" viewBox="0 0 5 8"><rect x="1.5" y="0" width="1.1" height="7.5" fill="#2a63ad"/><rect x="0" y="3.2" width="4.5" height="1.1" fill="#2a63ad"/></svg>
<svg class="a" style="left:847px;top:470px" width="10" height="8" viewBox="0 0 10 8"><rect x="0" y="3" width="3" height="1.2" fill="#1556aa"/><rect x="3" y="0" width="1.2" height="7" fill="#1556aa"/><rect x="4" y="1" width="5" height="1" fill="#1556aa"/><rect x="4" y="2" width="4" height="2" fill="#cfe0f4"/><rect x="4" y="4" width="5" height="2" fill="#1556aa"/><rect x="8" y="1" width="1" height="5" fill="#1556aa"/></svg>
<div class="t" style="left:858px;top:466px;color:#2a63ad;transform:scaleX(0.64);transform-origin:0 0">S</div>
<svg class="a" style="left:864px;top:470px" width="10" height="8" viewBox="0 0 10 8"><rect x="0" y="3" width="3" height="1.2" fill="#1556aa"/><rect x="3" y="0" width="1.2" height="7" fill="#1556aa"/><rect x="4" y="1" width="5" height="1" fill="#1556aa"/><rect x="4" y="2" width="4" height="2" fill="#cfe0f4"/><rect x="4" y="4" width="5" height="2" fill="#1556aa"/><rect x="8" y="1" width="1" height="5" fill="#1556aa"/></svg>
<div class="t" style="left:889px;top:466px;color:#2a63ad;font-size:13px;">Artikelbezeichnung</div>
<svg class="a" style="left:1014px;top:470px" width="10" height="8" viewBox="0 0 10 8"><rect x="0" y="3" width="3" height="1.2" fill="#1556aa"/><rect x="3" y="0" width="1.2" height="7" fill="#1556aa"/><rect x="4" y="1" width="5" height="1" fill="#1556aa"/><rect x="4" y="2" width="4" height="2" fill="#cfe0f4"/><rect x="4" y="4" width="5" height="2" fill="#1556aa"/><rect x="8" y="1" width="1" height="5" fill="#1556aa"/></svg>
<div class="t" style="left:1038px;top:466px;color:#2a63ad;font-size:13px;">Rang</div>
<svg class="a" style="left:1083px;top:470px" width="10" height="8" viewBox="0 0 10 8"><rect x="0" y="3" width="3" height="1.2" fill="#1556aa"/><rect x="3" y="0" width="1.2" height="7" fill="#1556aa"/><rect x="4" y="1" width="5" height="1" fill="#1556aa"/><rect x="4" y="2" width="4" height="2" fill="#cfe0f4"/><rect x="4" y="4" width="5" height="2" fill="#1556aa"/><rect x="8" y="1" width="1" height="5" fill="#1556aa"/></svg>
<div class="t" style="left:1096px;top:466px;color:#2a63ad;font-size:13px;">Fa</div>
<svg class="a" style="left:1113px;top:470px" width="10" height="8" viewBox="0 0 10 8"><rect x="0" y="3" width="3" height="1.2" fill="#1556aa"/><rect x="3" y="0" width="1.2" height="7" fill="#1556aa"/><rect x="4" y="1" width="5" height="1" fill="#1556aa"/><rect x="4" y="2" width="4" height="2" fill="#cfe0f4"/><rect x="4" y="4" width="5" height="2" fill="#1556aa"/><rect x="8" y="1" width="1" height="5" fill="#1556aa"/></svg>
<div class="t" style="left:1130px;top:466px;color:#2a63ad;font-size:13px;">Bemer</div>
<svg class="a" style="left:1173px;top:470px" width="10" height="8" viewBox="0 0 10 8"><rect x="0" y="3" width="3" height="1.2" fill="#1556aa"/><rect x="3" y="0" width="1.2" height="7" fill="#1556aa"/><rect x="4" y="1" width="5" height="1" fill="#1556aa"/><rect x="4" y="2" width="4" height="2" fill="#cfe0f4"/><rect x="4" y="4" width="5" height="2" fill="#1556aa"/><rect x="8" y="1" width="1" height="5" fill="#1556aa"/></svg>
<div class="t" style="left:1245px;top:466px;color:#2a63ad;font-size:13px;">Herstellerartikelnummer</div>
<svg class="a" style="left:1450px;top:470px" width="10" height="8" viewBox="0 0 10 8"><rect x="0" y="3" width="3" height="1.2" fill="#1556aa"/><rect x="3" y="0" width="1.2" height="7" fill="#1556aa"/><rect x="4" y="1" width="5" height="1" fill="#1556aa"/><rect x="4" y="2" width="4" height="2" fill="#cfe0f4"/><rect x="4" y="4" width="5" height="2" fill="#1556aa"/><rect x="8" y="1" width="1" height="5" fill="#1556aa"/></svg>
<div class="a" style="left:734px;top:487px;width:726px;height:5px;background:#f9f9f9;"></div>
<div class="a" style="left:734px;top:492px;width:726px;height:39px;background:#fff;"></div>
<div class="a" style="left:751px;top:491px;width:709px;height:1px;background:#ececec;"></div>
<div class="a" style="left:734px;top:531px;width:726px;height:1px;background:#e4e4e4;"></div>
<div class="a" style="left:751px;top:492px;width:1px;height:39px;background:#e4e4e4;"></div>
<div class="a" style="left:841px;top:492px;width:1px;height:39px;background:#e4e4e4;"></div>
<div class="a" style="left:857px;top:492px;width:1px;height:39px;background:#e4e4e4;"></div>
<div class="a" style="left:874px;top:492px;width:1px;height:39px;background:#e4e4e4;"></div>
<div class="a" style="left:1024px;top:492px;width:1px;height:39px;background:#e4e4e4;"></div>
<div class="a" style="left:1093px;top:492px;width:1px;height:39px;background:#e4e4e4;"></div>
<div class="a" style="left:1123px;top:492px;width:1px;height:39px;background:#e4e4e4;"></div>
<div class="a" style="left:1183px;top:492px;width:1px;height:39px;background:#e4e4e4;"></div>
<div class="a" style="left:734px;top:532px;width:726px;height:4px;background:#f9f9f9;"></div>
<div class="a" style="left:734px;top:536px;width:726px;height:1px;background:#e8e8e8;"></div>
<svg class="a" style="left:736px;top:505px" width="12" height="12" viewBox="0 0 12 12"><rect x="0.5" y="0.5" width="11" height="11" fill="#fff" stroke="#2c2c66" stroke-width="1.1"/><path d="M1.5 3.5 H10.5 M2.5 4 L5 7.2 V11 M10 4 L7.5 7.2 V11" fill="none" stroke="#6060d0" stroke-width="1"/><line x1="0.8" y1="11.2" x2="11.2" y2="0.8" stroke="#2c2c66" stroke-width="1.4"/></svg>
<svg class="a" style="left:755px;top:505px" width="12" height="12" viewBox="0 0 12 12"><rect x="0.5" y="0.5" width="11" height="11" fill="#fff" stroke="#2c2c66" stroke-width="1.1"/><rect x="3" y="3" width="6" height="6" fill="#6262cc"/></svg>
<div class="a" style="left:769px;top:492px;width:1px;height:39px;background:#a2a2a2;"></div>
<div class="a" style="left:842px;top:492px;width:15px;height:39px;background:#d3d3d3;"></div>
<div class="a" style="left:842px;top:492px;width:15px;height:1px;background:#a2a2a2;"></div>
<div class="a" style="left:842px;top:530px;width:15px;height:1px;background:#a2a2a2;"></div>
<div class="a" style="left:856px;top:492px;width:1px;height:39px;background:#a2a2a2;"></div>
<svg class="a" style="left:845px;top:506px" width="10" height="10" viewBox="0 0 10 10"><rect x="0.5" y="0.5" width="9" height="9" fill="#e4e4e4" stroke="#2c2c66" stroke-width="1.1"/><rect x="2" y="2" width="5" height="5" fill="#6262cc"/></svg>
<svg class="a" style="left:861px;top:506px" width="10" height="10" viewBox="0 0 10 10"><rect x="0.5" y="0.5" width="9" height="9" fill="#fff" stroke="#2c2c66" stroke-width="1.1"/><rect x="2" y="2" width="5" height="5" fill="#6262cc"/></svg>
<div class="a" style="left:873px;top:492px;width:1px;height:39px;background:#a2a2a2;"></div>
<svg class="a" style="left:878px;top:505px" width="12" height="12" viewBox="0 0 12 12"><rect x="0.5" y="0.5" width="11" height="11" fill="#fff" stroke="#2c2c66" stroke-width="1.1"/><rect x="3" y="3" width="6" height="6" fill="#6262cc"/></svg>
<div class="a" style="left:892px;top:492px;width:1px;height:39px;background:#a2a2a2;"></div>
<svg class="a" style="left:1028px;top:505px" width="12" height="12" viewBox="0 0 12 12"><rect x="0.5" y="0.5" width="11" height="11" fill="#fff" stroke="#2c2c66" stroke-width="1.1"/><rect x="3" y="3" width="6" height="6" fill="#6262cc"/></svg>
<div class="a" style="left:1042px;top:492px;width:1px;height:39px;background:#a2a2a2;"></div>
<svg class="a" style="left:1097px;top:505px" width="12" height="12" viewBox="0 0 12 12"><rect x="0.5" y="0.5" width="11" height="11" fill="#fff" stroke="#2c2c66" stroke-width="1.1"/><rect x="3" y="3" width="6" height="6" fill="#6262cc"/></svg>
<div class="a" style="left:1111px;top:492px;width:1px;height:39px;background:#a2a2a2;"></div>
<svg class="a" style="left:1127px;top:505px" width="12" height="12" viewBox="0 0 12 12"><rect x="0.5" y="0.5" width="11" height="11" fill="#fff" stroke="#2c2c66" stroke-width="1.1"/><rect x="3" y="3" width="6" height="6" fill="#6262cc"/></svg>
<div class="a" style="left:1141px;top:492px;width:1px;height:39px;background:#a2a2a2;"></div>
<svg class="a" style="left:1187px;top:505px" width="12" height="12" viewBox="0 0 12 12"><rect x="0.5" y="0.5" width="11" height="11" fill="#fff" stroke="#2c2c66" stroke-width="1.1"/><rect x="3" y="3" width="6" height="6" fill="#6262cc"/></svg>
<div class="a" style="left:1201px;top:492px;width:1px;height:39px;background:#a2a2a2;"></div>
<div class="a" style="left:734px;top:537px;width:726px;height:56px;background:#fff;"></div>
<div class="a" style="left:734px;top:593px;width:726px;height:1px;background:#e4e4e4;"></div>
<div class="a" style="left:751px;top:537px;width:1px;height:56px;background:#e4e4e4;"></div>
<div class="a" style="left:841px;top:537px;width:1px;height:56px;background:#e4e4e4;"></div>
<div class="a" style="left:857px;top:537px;width:1px;height:56px;background:#e4e4e4;"></div>
<div class="a" style="left:874px;top:537px;width:1px;height:56px;background:#e4e4e4;"></div>
<div class="a" style="left:1024px;top:537px;width:1px;height:56px;background:#e4e4e4;"></div>
<div class="a" style="left:1093px;top:537px;width:1px;height:56px;background:#e4e4e4;"></div>
<div class="a" style="left:1123px;top:537px;width:1px;height:56px;background:#e4e4e4;"></div>
<div class="a" style="left:1183px;top:537px;width:1px;height:56px;background:#e4e4e4;"></div>
<div class="a" style="left:842px;top:537px;width:16px;height:56px;background:#d3d3d3;"></div>
<div class="t" style="left:758px;top:541px;color:#474747;font-size:13px;letter-spacing:-0.7px">ELB000420</div>
<svg class="a" style="left:844px;top:559px" width="12" height="12" viewBox="0 0 12 12"><rect x="4.2" y="0" width="3.6" height="12" fill="#24cc08"/><rect x="0" y="4.2" width="12" height="3.6" fill="#24cc08"/></svg>
<div class="a" style="left:862.0px;top:561.4px;width:7.0px;height:7.0px;border-radius:50%;background:#959595"></div>
<div class="t" style="left:881px;top:541px;color:#474747;line-height:16.5px">Register A-Z f. A4 20<br>Blatt chamois18x23cm<br>Tauenpapier 80 g je qm</div>
<div class="t" style="right:776px;top:541px;color:#474747;font-size:13px;text-align:right;">0</div>
<div class="a" style="left:1101.0px;top:557.5px;width:14px;height:14px;border-radius:50%;background:#828282"></div>
<div class="t" style="left:1190px;top:541px;color:#474747;font-size:13px;">000420    50002</div>
<div class="a" style="left:734px;top:594px;width:726px;height:89px;background:#fff;"></div>
<div class="a" style="left:734px;top:683px;width:726px;height:1px;background:#e4e4e4;"></div>
<div class="a" style="left:751px;top:594px;width:1px;height:89px;background:#e4e4e4;"></div>
<div class="a" style="left:841px;top:594px;width:1px;height:89px;background:#e4e4e4;"></div>
<div class="a" style="left:857px;top:594px;width:1px;height:89px;background:#e4e4e4;"></div>
<div class="a" style="left:874px;top:594px;width:1px;height:89px;background:#e4e4e4;"></div>
<div class="a" style="left:1024px;top:594px;width:1px;height:89px;background:#e4e4e4;"></div>
<div class="a" style="left:1093px;top:594px;width:1px;height:89px;background:#e4e4e4;"></div>
<div class="a" style="left:1123px;top:594px;width:1px;height:89px;background:#e4e4e4;"></div>
<div class="a" style="left:1183px;top:594px;width:1px;height:89px;background:#e4e4e4;"></div>
<div class="a" style="left:842px;top:594px;width:16px;height:89px;background:#d3d3d3;"></div>
<div class="t" style="left:758px;top:598px;color:#474747;font-size:13px;letter-spacing:-0.45px">OT4320.ws</div>
<svg class="a" style="left:844px;top:633px" width="12" height="12" viewBox="0 0 12 12"><rect x="4.2" y="0" width="3.6" height="12" fill="#24cc08"/><rect x="0" y="4.2" width="12" height="3.6" fill="#24cc08"/></svg>
<div class="a" style="left:862.0px;top:634.9px;width:7.0px;height:7.0px;border-radius:50%;background:#959595"></div>
<div class="t" style="left:881px;top:598px;color:#474747;line-height:16.5px">Trennstreifen<br>Trennstreifen, weiß, 10,5<br>x 24,0 cm (H x B), 190<br>g/qm, Recyclingkarton,<br>PA=100 St</div>
<div class="t" style="right:776px;top:598px;color:#474747;font-size:13px;text-align:right;">0</div>
<div class="a" style="left:1101.0px;top:631.0px;width:14px;height:14px;border-radius:50%;background:#828282"></div>
<div class="t" style="left:1190px;top:598px;color:#474747;font-size:13px;letter-spacing:-0.45px">OT4320.ws</div>
<div class="a" style="left:1466px;top:437px;width:396px;height:23px;background:#14559f;box-shadow:inset 0 -1px 0 #0b4a9a, inset 1px 0 0 #0b4a9a, inset -1px 0 0 #0b4a9a;clip-path:polygon(2px 0,calc(100% - 2px) 0,100% 2px,100% 100%,0 100%,0 2px)"></div>
<div class="t" style="left:1469px;top:441px;color:#fff;font-size:13px;">Verbrauchsmaterial</div>
<div class="a" style="left:1466px;top:460px;width:394px;height:274px;border:1px solid #c5d0df;border-top:none;background:#f9f9f9"></div>
<div class="a" style="left:1467px;top:460px;width:394px;height:26px;background:#fff;"></div>
<div class="a" style="left:1485px;top:486px;width:376px;height:1px;background:#e4e4e4;"></div>
<div class="a" style="left:1575px;top:460px;width:1px;height:26px;background:#e4e4e4;"></div>
<div class="a" style="left:1591px;top:460px;width:1px;height:26px;background:#e4e4e4;"></div>
<div class="a" style="left:1608px;top:460px;width:1px;height:26px;background:#e4e4e4;"></div>
<div class="a" style="left:1758px;top:460px;width:1px;height:26px;background:#e4e4e4;"></div>
<div class="a" style="left:1827px;top:460px;width:1px;height:26px;background:#e4e4e4;"></div>
<div class="a" style="left:1857px;top:460px;width:1px;height:26px;background:#e4e4e4;"></div>
<svg class="a" style="left:1469px;top:467px" width="15" height="15" viewBox="0 0 15 15"><rect x="3" y="0" width="11" height="10" fill="#fff"/><rect x="4" y="1" width="9" height="2.6" fill="#a8a8dc"/><path d="M3.5 10 V0.5 H13.5" fill="none" stroke="#7d7dc2"/><path d="M13.5 0.5 V9.5 H3" fill="none" stroke="#2c2c66"/><line x1="4" y1="6.5" x2="13" y2="6.5" stroke="#9292d2"/><rect x="0" y="4" width="7" height="10" fill="#fff"/><path d="M0.5 14 V4.5 H7" fill="none" stroke="#6c6cb4"/><path d="M6.5 4.5 V13.5 H0" fill="none" stroke="#2c2c66"/><line x1="1" y1="7.5" x2="6" y2="7.5" stroke="#8c8cc8"/><line x1="1" y1="10.5" x2="6" y2="10.5" stroke="#8c8cc8"/><path d="M4.3 6.6 H7.6 Q9.5 6.6 9.5 4.8 V3.2" fill="none" stroke="#111" stroke-width="1.15"/><path d="M7.1 3.7 L9.5 0.9 L11.9 3.7 Z" fill="#1a1a3a"/></svg>
<div class="t" style="left:1494px;top:466px;color:#2a63ad;font-size:13px;">Artikelnum</div>
<svg class="a" style="left:1565px;top:470px" width="10" height="8" viewBox="0 0 10 8"><rect x="0" y="3" width="3" height="1.2" fill="#1556aa"/><rect x="3" y="0" width="1.2" height="7" fill="#1556aa"/><rect x="4" y="1" width="5" height="1" fill="#1556aa"/><rect x="4" y="2" width="4" height="2" fill="#cfe0f4"/><rect x="4" y="4" width="5" height="2" fill="#1556aa"/><rect x="8" y="1" width="1" height="5" fill="#1556aa"/></svg>
<svg class="a" style="left:1576px;top:470px" width="5" height="8" viewBox="0 0 5 8"><rect x="1.5" y="0" width="1.1" height="7.5" fill="#2a63ad"/><rect x="0" y="3.2" width="4.5" height="1.1" fill="#2a63ad"/></svg>
<svg class="a" style="left:1581px;top:470px" width="10" height="8" viewBox="0 0 10 8"><rect x="0" y="3" width="3" height="1.2" fill="#1556aa"/><rect x="3" y="0" width="1.2" height="7" fill="#1556aa"/><rect x="4" y="1" width="5" height="1" fill="#1556aa"/><rect x="4" y="2" width="4" height="2" fill="#cfe0f4"/><rect x="4" y="4" width="5" height="2" fill="#1556aa"/><rect x="8" y="1" width="1" height="5" fill="#1556aa"/></svg>
<div class="t" style="left:1592px;top:466px;color:#2a63ad;transform:scaleX(0.64);transform-origin:0 0">S</div>
<svg class="a" style="left:1598px;top:470px" width="10" height="8" viewBox="0 0 10 8"><rect x="0" y="3" width="3" height="1.2" fill="#1556aa"/><rect x="3" y="0" width="1.2" height="7" fill="#1556aa"/><rect x="4" y="1" width="5" height="1" fill="#1556aa"/><rect x="4" y="2" width="4" height="2" fill="#cfe0f4"/><rect x="4" y="4" width="5" height="2" fill="#1556aa"/><rect x="8" y="1" width="1" height="5" fill="#1556aa"/></svg>
<div class="t" style="left:1623px;top:466px;color:#2a63ad;font-size:13px;">Artikelbezeichnung</div>
<svg class="a" style="left:1748px;top:470px" width="10" height="8" viewBox="0 0 10 8"><rect x="0" y="3" width="3" height="1.2" fill="#1556aa"/><rect x="3" y="0" width="1.2" height="7" fill="#1556aa"/><rect x="4" y="1" width="5" height="1" fill="#1556aa"/><rect x="4" y="2" width="4" height="2" fill="#cfe0f4"/><rect x="4" y="4" width="5" height="2" fill="#1556aa"/><rect x="8" y="1" width="1" height="5" fill="#1556aa"/></svg>
<div class="t" style="left:1772px;top:466px;color:#2a63ad;font-size:13px;">Rang</div>
<svg class="a" style="left:1817px;top:470px" width="10" height="8" viewBox="0 0 10 8"><rect x="0" y="3" width="3" height="1.2" fill="#1556aa"/><rect x="3" y="0" width="1.2" height="7" fill="#1556aa"/><rect x="4" y="1" width="5" height="1" fill="#1556aa"/><rect x="4" y="2" width="4" height="2" fill="#cfe0f4"/><rect x="4" y="4" width="5" height="2" fill="#1556aa"/><rect x="8" y="1" width="1" height="5" fill="#1556aa"/></svg>
<div class="t" style="left:1830px;top:466px;color:#2a63ad;font-size:13px;">Fa</div>
<svg class="a" style="left:1847px;top:470px" width="10" height="8" viewBox="0 0 10 8"><rect x="0" y="3" width="3" height="1.2" fill="#1556aa"/><rect x="3" y="0" width="1.2" height="7" fill="#1556aa"/><rect x="4" y="1" width="5" height="1" fill="#1556aa"/><rect x="4" y="2" width="4" height="2" fill="#cfe0f4"/><rect x="4" y="4" width="5" height="2" fill="#1556aa"/><rect x="8" y="1" width="1" height="5" fill="#1556aa"/></svg>
<div class="a" style="left:1467px;top:487px;width:394px;height:5px;background:#f9f9f9;"></div>
<div class="a" style="left:1467px;top:492px;width:394px;height:39px;background:#fff;"></div>
<div class="a" style="left:1486px;top:491px;width:375px;height:1px;background:#ececec;"></div>
<div class="a" style="left:1467px;top:531px;width:394px;height:1px;background:#e4e4e4;"></div>
<div class="a" style="left:1575px;top:492px;width:1px;height:39px;background:#e4e4e4;"></div>
<div class="a" style="left:1591px;top:492px;width:1px;height:39px;background:#e4e4e4;"></div>
<div class="a" style="left:1608px;top:492px;width:1px;height:39px;background:#e4e4e4;"></div>
<div class="a" style="left:1758px;top:492px;width:1px;height:39px;background:#e4e4e4;"></div>
<div class="a" style="left:1827px;top:492px;width:1px;height:39px;background:#e4e4e4;"></div>
<div class="a" style="left:1857px;top:492px;width:1px;height:39px;background:#e4e4e4;"></div>
<div class="a" style="left:1467px;top:532px;width:394px;height:4px;background:#f9f9f9;"></div>
<svg class="a" style="left:1470px;top:505px" width="12" height="12" viewBox="0 0 12 12"><rect x="0.5" y="0.5" width="11" height="11" fill="#fff" stroke="#2c2c66" stroke-width="1.1"/><path d="M1.5 3.5 H10.5 M2.5 4 L5 7.2 V11 M10 4 L7.5 7.2 V11" fill="none" stroke="#6060d0" stroke-width="1"/><line x1="0.8" y1="11.2" x2="11.2" y2="0.8" stroke="#2c2c66" stroke-width="1.4"/></svg>
<div class="a" style="left:1576px;top:492px;width:15px;height:39px;background:#d3d3d3;"></div>
<div class="a" style="left:1576px;top:492px;width:15px;height:1px;background:#a2a2a2;"></div>
<div class="a" style="left:1576px;top:530px;width:15px;height:1px;background:#a2a2a2;"></div>
<div class="a" style="left:1590px;top:492px;width:1px;height:39px;background:#a2a2a2;"></div>
<svg class="a" style="left:1579px;top:506px" width="10" height="10" viewBox="0 0 10 10"><rect x="0.5" y="0.5" width="9" height="9" fill="#e4e4e4" stroke="#2c2c66" stroke-width="1.1"/><rect x="2" y="2" width="5" height="5" fill="#6262cc"/></svg>
<svg class="a" style="left:1595px;top:506px" width="10" height="10" viewBox="0 0 10 10"><rect x="0.5" y="0.5" width="9" height="9" fill="#fff" stroke="#2c2c66" stroke-width="1.1"/><rect x="2" y="2" width="5" height="5" fill="#6262cc"/></svg>
<div class="a" style="left:1607px;top:492px;width:1px;height:39px;background:#a2a2a2;"></div>
<svg class="a" style="left:1612px;top:505px" width="12" height="12" viewBox="0 0 12 12"><rect x="0.5" y="0.5" width="11" height="11" fill="#fff" stroke="#2c2c66" stroke-width="1.1"/><rect x="3" y="3" width="6" height="6" fill="#6262cc"/></svg>
<div class="a" style="left:1626px;top:492px;width:1px;height:39px;background:#a2a2a2;"></div>
<svg class="a" style="left:1762px;top:505px" width="12" height="12" viewBox="0 0 12 12"><rect x="0.5" y="0.5" width="11" height="11" fill="#fff" stroke="#2c2c66" stroke-width="1.1"/><rect x="3" y="3" width="6" height="6" fill="#6262cc"/></svg>
<div class="a" style="left:1776px;top:492px;width:1px;height:39px;background:#a2a2a2;"></div>
<svg class="a" style="left:1831px;top:505px" width="12" height="12" viewBox="0 0 12 12"><rect x="0.5" y="0.5" width="11" height="11" fill="#fff" stroke="#2c2c66" stroke-width="1.1"/><rect x="3" y="3" width="6" height="6" fill="#6262cc"/></svg>
<div class="a" style="left:1845px;top:492px;width:1px;height:39px;background:#a2a2a2;"></div>
<div class="a" style="left:1485px;top:492px;width:90px;height:38px;border:1px solid #f59a6a;"></div>
<div class="a" style="left:1487px;top:494px;width:16px;height:36px;background:#efefef;"></div>
<div class="a" style="left:1503px;top:494px;width:1px;height:36px;background:#a0a0a0;"></div>
<div class="a" style="left:1558px;top:494px;width:17px;height:36px;background:#efefef;"></div>
<div class="a" style="left:1486px;top:493px;width:88px;height:37px;border:1px dotted #111;border-top:none"></div>
<svg class="a" style="left:1489px;top:505px" width="12" height="12" viewBox="0 0 12 12"><rect x="0.5" y="0.5" width="11" height="11" fill="#fff" stroke="#2c2c66" stroke-width="1.1"/><rect x="3" y="3" width="6" height="6" fill="#6262cc"/></svg>
<svg class="a" style="left:1563px;top:510px" width="8" height="5" viewBox="0 0 8 5"><path d="M0 0 L7 0 L3.5 4.5 Z" fill="#000"/></svg>
<div class="a" style="left:1467px;top:717px;width:15px;height:15px;border:1px solid #a6a6a6;background:#f9f9f9;"></div>
<svg class="a" style="left:1472.5px;top:721.5px" width="6" height="8" viewBox="0 0 6 8"><path d="M5 0.5 L5 7.5 L0.8 4 Z" fill="#5a5a5a"/></svg>
<div class="a" style="left:1483px;top:717px;width:208px;height:15px;border:1px solid #a6a6a6;background:#fff;"></div>
<div class="a" style="left:1844px;top:717px;width:15px;height:15px;border:1px solid #a6a6a6;background:#f9f9f9;"></div>
<svg class="a" style="left:1849.5px;top:721.5px" width="6" height="8" viewBox="0 0 6 8"><path d="M1 0.5 L1 7.5 L5.2 4 Z" fill="#5a5a5a"/></svg>
<div class="a" style="left:0px;top:740px;width:727px;height:23px;background:#14559f;box-shadow:inset 0 -1px 0 #0b4a9a, inset 1px 0 0 #0b4a9a, inset -1px 0 0 #0b4a9a;clip-path:polygon(0 0,calc(100% - 2px) 0,100% 2px,100% 100%,0 100%)"></div>
<div class="t" style="left:1px;top:744px;color:#fff;font-size:13px;">Katalog</div>
<div class="a" style="left:-1px;top:763px;width:726px;height:153px;border:1px solid #c5d0df;border-top:none;background:#f9f9f9"></div>
<div class="a" style="left:0px;top:763px;width:726px;height:26px;background:#fff;"></div>
<div class="a" style="left:18px;top:789px;width:708px;height:1px;background:#e4e4e4;"></div>
<div class="a" style="left:152px;top:763px;width:1px;height:26px;background:#e4e4e4;"></div>
<div class="a" style="left:202px;top:763px;width:1px;height:26px;background:#e4e4e4;"></div>
<div class="a" style="left:252px;top:763px;width:1px;height:26px;background:#e4e4e4;"></div>
<div class="a" style="left:302px;top:763px;width:1px;height:26px;background:#e4e4e4;"></div>
<div class="a" style="left:352px;top:763px;width:1px;height:26px;background:#e4e4e4;"></div>
<div class="a" style="left:502px;top:763px;width:1px;height:26px;background:#e4e4e4;"></div>
<div class="a" style="left:576px;top:763px;width:1px;height:26px;background:#e4e4e4;"></div>
<div class="a" style="left:662px;top:763px;width:1px;height:26px;background:#e4e4e4;"></div>
<svg class="a" style="left:1px;top:770px" width="15" height="15" viewBox="0 0 15 15"><rect x="3" y="0" width="11" height="10" fill="#fff"/><rect x="4" y="1" width="9" height="2.6" fill="#a8a8dc"/><path d="M3.5 10 V0.5 H13.5" fill="none" stroke="#7d7dc2"/><path d="M13.5 0.5 V9.5 H3" fill="none" stroke="#2c2c66"/><line x1="4" y1="6.5" x2="13" y2="6.5" stroke="#9292d2"/><rect x="0" y="4" width="7" height="10" fill="#fff"/><path d="M0.5 14 V4.5 H7" fill="none" stroke="#6c6cb4"/><path d="M6.5 4.5 V13.5 H0" fill="none" stroke="#2c2c66"/><line x1="1" y1="7.5" x2="6" y2="7.5" stroke="#8c8cc8"/><line x1="1" y1="10.5" x2="6" y2="10.5" stroke="#8c8cc8"/><path d="M4.3 6.6 H7.6 Q9.5 6.6 9.5 4.8 V3.2" fill="none" stroke="#111" stroke-width="1.15"/><path d="M7.1 3.7 L9.5 0.9 L11.9 3.7 Z" fill="#1a1a3a"/></svg>
<div class="t" style="left:18px;width:134px;top:769px;color:#2a63ad;font-size:13px;text-align:center;">Katalog</div>
<div class="t" style="left:152px;width:50px;top:769px;color:#2a63ad;font-size:13px;text-align:center;">Kapitel</div>
<div class="t" style="left:202px;width:50px;top:769px;color:#2a63ad;font-size:13px;text-align:center;">Kapitel</div>
<div class="t" style="left:252px;width:50px;top:769px;color:#2a63ad;font-size:13px;text-align:center;">Seite</div>
<div class="t" style="left:302px;width:50px;top:769px;color:#2a63ad;font-size:13px;text-align:center;">Positio</div>
<div class="t" style="left:352px;width:150px;top:769px;color:#2a63ad;font-size:13px;text-align:center;">Abweichende Artikelnu</div>
<div class="t" style="left:502px;width:74px;top:769px;color:#2a63ad;font-size:13px;text-align:center;">Preis</div>
<div class="t" style="left:576px;width:86px;top:769px;color:#2a63ad;font-size:13px;text-align:center;">Sortiment</div>
<div class="t" style="left:671px;top:769px;color:#2a63ad;font-size:13px;">Angelegt</div>
<div class="a" style="left:0px;top:899px;width:15px;height:15px;border:1px solid #a6a6a6;background:#f9f9f9;"></div>
<svg class="a" style="left:5.5px;top:903.5px" width="6" height="8" viewBox="0 0 6 8"><path d="M5 0.5 L5 7.5 L0.8 4 Z" fill="#5a5a5a"/></svg>
<div class="a" style="left:16px;top:899px;width:429px;height:15px;border:1px solid #a6a6a6;background:#fff;"></div>
<div class="a" style="left:709px;top:899px;width:15px;height:15px;border:1px solid #a6a6a6;background:#f9f9f9;"></div>
<svg class="a" style="left:714.5px;top:903.5px" width="6" height="8" viewBox="0 0 6 8"><path d="M1 0.5 L1 7.5 L5.2 4 Z" fill="#5a5a5a"/></svg>
<div class="a" style="left:732px;top:740px;width:729px;height:23px;background:#14559f;box-shadow:inset 0 -1px 0 #0b4a9a, inset 1px 0 0 #0b4a9a, inset -1px 0 0 #0b4a9a;clip-path:polygon(2px 0,calc(100% - 2px) 0,100% 2px,100% 100%,0 100%,0 2px)"></div>
<div class="t" style="left:735px;top:744px;color:#fff;font-size:13px;">Top 10 Kunde (noch nicht im Auftrag)</div>
<div class="a" style="left:732px;top:763px;width:727px;height:153px;border:1px solid #c5d0df;border-top:none;background:#f9f9f9"></div>
<div class="a" style="left:733px;top:763px;width:727px;height:26px;background:#fff;"></div>
<div class="a" style="left:751px;top:789px;width:709px;height:1px;background:#e4e4e4;"></div>
<div class="a" style="left:767px;top:763px;width:1px;height:26px;background:#e4e4e4;"></div>
<div class="a" style="left:784px;top:763px;width:1px;height:26px;background:#e4e4e4;"></div>
<div class="a" style="left:862px;top:763px;width:1px;height:26px;background:#e4e4e4;"></div>
<div class="a" style="left:970px;top:763px;width:1px;height:26px;background:#e4e4e4;"></div>
<div class="a" style="left:1039px;top:763px;width:1px;height:26px;background:#e4e4e4;"></div>
<svg class="a" style="left:735px;top:770px" width="15" height="15" viewBox="0 0 15 15"><rect x="3" y="0" width="11" height="10" fill="#fff"/><rect x="4" y="1" width="9" height="2.6" fill="#a8a8dc"/><path d="M3.5 10 V0.5 H13.5" fill="none" stroke="#7d7dc2"/><path d="M13.5 0.5 V9.5 H3" fill="none" stroke="#2c2c66"/><line x1="4" y1="6.5" x2="13" y2="6.5" stroke="#9292d2"/><rect x="0" y="4" width="7" height="10" fill="#fff"/><path d="M0.5 14 V4.5 H7" fill="none" stroke="#6c6cb4"/><path d="M6.5 4.5 V13.5 H0" fill="none" stroke="#2c2c66"/><line x1="1" y1="7.5" x2="6" y2="7.5" stroke="#8c8cc8"/><line x1="1" y1="10.5" x2="6" y2="10.5" stroke="#8c8cc8"/><path d="M4.3 6.6 H7.6 Q9.5 6.6 9.5 4.8 V3.2" fill="none" stroke="#111" stroke-width="1.15"/><path d="M7.1 3.7 L9.5 0.9 L11.9 3.7 Z" fill="#1a1a3a"/></svg>
<div class="t" style="left:756px;top:769px;color:#2a63ad;font-size:13px;">+</div>
<div class="t" style="left:770px;top:769px;color:#2a63ad;font-size:13px;">St</div>
<div class="t" style="left:792px;top:769px;color:#2a63ad;font-size:13px;">Artikelnum</div>
<div class="t" style="left:869px;top:769px;color:#2a63ad;font-size:13px;">Artikelbezeichnu</div>
<div class="t" style="left:986px;top:769px;color:#2a63ad;font-size:13px;">Anzahl</div>
<div class="t" style="left:1039px;width:421px;top:769px;color:#2a63ad;font-size:13px;text-align:center;">Geschäftsbereich</div>
<div class="a" style="left:733px;top:790px;width:727px;height:23px;background:#fff;"></div>
<div class="a" style="left:752px;top:790px;width:15px;height:23px;background:#d3d3d3;"></div>
<div class="a" style="left:733px;top:813px;width:727px;height:1px;background:#e4e4e4;"></div>
<div class="a" style="left:767px;top:790px;width:1px;height:23px;background:#e4e4e4;"></div>
<div class="a" style="left:784px;top:790px;width:1px;height:23px;background:#e4e4e4;"></div>
<div class="a" style="left:862px;top:790px;width:1px;height:23px;background:#e4e4e4;"></div>
<div class="a" style="left:970px;top:790px;width:1px;height:23px;background:#e4e4e4;"></div>
<div class="a" style="left:1039px;top:790px;width:1px;height:23px;background:#e4e4e4;"></div>
<svg class="a" style="left:754px;top:796px" width="12" height="12" viewBox="0 0 12 12"><rect x="4.2" y="0" width="3.6" height="12" fill="#24cc08"/><rect x="0" y="4.2" width="12" height="3.6" fill="#24cc08"/></svg>
<div class="a" style="left:772.5px;top:798.0px;width:7.0px;height:7.0px;border-radius:50%;background:#959595"></div>
<div class="t" style="left:791px;top:794px;color:#000;font-size:13px;letter-spacing:-0.7px">ELB062432</div>
<div class="t" style="left:869px;top:794px;color:#000;font-size:13px;">Prospektalbum f.</div>
<div class="t" style="right:831px;top:794px;color:#000;font-size:13px;text-align:right;">1</div>
<div class="t" style="left:1046px;top:794px;color:#000;font-size:13px;">Vertrieb</div>
<div class="a" style="left:733px;top:814px;width:727px;height:23px;background:#fff;"></div>
<div class="a" style="left:752px;top:814px;width:15px;height:23px;background:#d3d3d3;"></div>
<div class="a" style="left:733px;top:837px;width:727px;height:1px;background:#e4e4e4;"></div>
<div class="a" style="left:767px;top:814px;width:1px;height:23px;background:#e4e4e4;"></div>
<div class="a" style="left:784px;top:814px;width:1px;height:23px;background:#e4e4e4;"></div>
<div class="a" style="left:862px;top:814px;width:1px;height:23px;background:#e4e4e4;"></div>
<div class="a" style="left:970px;top:814px;width:1px;height:23px;background:#e4e4e4;"></div>
<div class="a" style="left:1039px;top:814px;width:1px;height:23px;background:#e4e4e4;"></div>
<svg class="a" style="left:754px;top:820px" width="12" height="12" viewBox="0 0 12 12"><rect x="4.2" y="0" width="3.6" height="12" fill="#24cc08"/><rect x="0" y="4.2" width="12" height="3.6" fill="#24cc08"/></svg>
<div class="a" style="left:772.5px;top:822.0px;width:7.0px;height:7.0px;border-radius:50%;background:#959595"></div>
<div class="t" style="left:791px;top:818px;color:#000;font-size:13px;letter-spacing:-0.7px">ELB076442</div>
<div class="t" style="left:869px;top:818px;color:#000;font-size:13px;">Sichthülle f. A4 d</div>
<div class="t" style="right:831px;top:818px;color:#000;font-size:13px;text-align:right;">1</div>
<div class="t" style="left:1046px;top:818px;color:#000;font-size:13px;">Vertrieb</div>
<div class="a" style="left:733px;top:838px;width:727px;height:23px;background:#fff;"></div>
<div class="a" style="left:752px;top:838px;width:15px;height:23px;background:#d3d3d3;"></div>
<div class="a" style="left:733px;top:861px;width:727px;height:1px;background:#e4e4e4;"></div>
<div class="a" style="left:767px;top:838px;width:1px;height:23px;background:#e4e4e4;"></div>
<div class="a" style="left:784px;top:838px;width:1px;height:23px;background:#e4e4e4;"></div>
<div class="a" style="left:862px;top:838px;width:1px;height:23px;background:#e4e4e4;"></div>
<div class="a" style="left:970px;top:838px;width:1px;height:23px;background:#e4e4e4;"></div>
<div class="a" style="left:1039px;top:838px;width:1px;height:23px;background:#e4e4e4;"></div>
<svg class="a" style="left:754px;top:844px" width="12" height="12" viewBox="0 0 12 12"><rect x="4.2" y="0" width="3.6" height="12" fill="#24cc08"/><rect x="0" y="4.2" width="12" height="3.6" fill="#24cc08"/></svg>
<div class="a" style="left:772.5px;top:846.0px;width:7.0px;height:7.0px;border-radius:50%;background:#959595"></div>
<div class="t" style="left:791px;top:842px;color:#000;font-size:13px;letter-spacing:-0.7px">ELB085807</div>
<div class="t" style="left:869px;top:842px;color:#000;font-size:13px;">Hängehefter vert</div>
<div class="t" style="right:831px;top:842px;color:#000;font-size:13px;text-align:right;">1</div>
<div class="t" style="left:1046px;top:842px;color:#000;font-size:13px;">Bürobedarf</div>
<div class="a" style="left:733px;top:862px;width:727px;height:23px;background:#fff;"></div>
<div class="a" style="left:752px;top:862px;width:15px;height:23px;background:#d3d3d3;"></div>
<div class="a" style="left:733px;top:885px;width:727px;height:1px;background:#e4e4e4;"></div>
<div class="a" style="left:767px;top:862px;width:1px;height:23px;background:#e4e4e4;"></div>
<div class="a" style="left:784px;top:862px;width:1px;height:23px;background:#e4e4e4;"></div>
<div class="a" style="left:862px;top:862px;width:1px;height:23px;background:#e4e4e4;"></div>
<div class="a" style="left:970px;top:862px;width:1px;height:23px;background:#e4e4e4;"></div>
<div class="a" style="left:1039px;top:862px;width:1px;height:23px;background:#e4e4e4;"></div>
<svg class="a" style="left:754px;top:868px" width="12" height="12" viewBox="0 0 12 12"><rect x="4.2" y="0" width="3.6" height="12" fill="#24cc08"/><rect x="0" y="4.2" width="12" height="3.6" fill="#24cc08"/></svg>
<div class="a" style="left:772.5px;top:870.0px;width:7.0px;height:7.0px;border-radius:50%;background:#959595"></div>
<div class="t" style="left:791px;top:866px;color:#000;font-size:13px;letter-spacing:-0.7px">ELB099201</div>
<div class="t" style="left:869px;top:866px;color:#000;font-size:13px;">Farbsignal slbstk</div>
<div class="t" style="right:831px;top:866px;color:#000;font-size:13px;text-align:right;">1</div>
<div class="t" style="left:1046px;top:866px;color:#000;font-size:13px;">Vertrieb</div>
<div class="a" style="left:1466px;top:740px;width:396px;height:23px;background:#14559f;box-shadow:inset 0 -1px 0 #0b4a9a, inset 1px 0 0 #0b4a9a, inset -1px 0 0 #0b4a9a;clip-path:polygon(2px 0,calc(100% - 2px) 0,100% 2px,100% 100%,0 100%,0 2px)"></div>
<div class="t" style="left:1469px;top:744px;color:#fff;font-size:13px;">Artikelempfehlungen</div>
<div class="a" style="left:1466px;top:763px;width:394px;height:153px;border:1px solid #c5d0df;border-top:none;background:#f9f9f9"></div>
<div class="a" style="left:1467px;top:763px;width:394px;height:26px;background:#fff;"></div>
<div class="a" style="left:1485px;top:789px;width:376px;height:1px;background:#e4e4e4;"></div>
<div class="a" style="left:1501px;top:763px;width:1px;height:26px;background:#e4e4e4;"></div>
<div class="a" style="left:1518px;top:763px;width:1px;height:26px;background:#e4e4e4;"></div>
<div class="a" style="left:1596px;top:763px;width:1px;height:26px;background:#e4e4e4;"></div>
<div class="a" style="left:1704px;top:763px;width:1px;height:26px;background:#e4e4e4;"></div>
<div class="a" style="left:1773px;top:763px;width:1px;height:26px;background:#e4e4e4;"></div>
<div class="a" style="left:1847px;top:763px;width:1px;height:26px;background:#e4e4e4;"></div>
<svg class="a" style="left:1469px;top:770px" width="15" height="15" viewBox="0 0 15 15"><rect x="3" y="0" width="11" height="10" fill="#fff"/><rect x="4" y="1" width="9" height="2.6" fill="#a8a8dc"/><path d="M3.5 10 V0.5 H13.5" fill="none" stroke="#7d7dc2"/><path d="M13.5 0.5 V9.5 H3" fill="none" stroke="#2c2c66"/><line x1="4" y1="6.5" x2="13" y2="6.5" stroke="#9292d2"/><rect x="0" y="4" width="7" height="10" fill="#fff"/><path d="M0.5 14 V4.5 H7" fill="none" stroke="#6c6cb4"/><path d="M6.5 4.5 V13.5 H0" fill="none" stroke="#2c2c66"/><line x1="1" y1="7.5" x2="6" y2="7.5" stroke="#8c8cc8"/><line x1="1" y1="10.5" x2="6" y2="10.5" stroke="#8c8cc8"/><path d="M4.3 6.6 H7.6 Q9.5 6.6 9.5 4.8 V3.2" fill="none" stroke="#111" stroke-width="1.15"/><path d="M7.1 3.7 L9.5 0.9 L11.9 3.7 Z" fill="#1a1a3a"/></svg>
<div class="t" style="left:1490px;top:769px;color:#2a63ad;font-size:13px;">+</div>
<div class="t" style="left:1504px;top:769px;color:#2a63ad;font-size:13px;">St</div>
<div class="t" style="left:1526px;top:769px;color:#2a63ad;font-size:13px;">Artikelnum</div>
<div class="t" style="left:1603px;top:769px;color:#2a63ad;font-size:13px;">Artikelbezeichnu</div>
<div class="t" style="left:1720px;top:769px;color:#2a63ad;font-size:13px;">Anzahl</div>
<div class="t" style="left:1779px;top:769px;color:#2a63ad;font-size:13px;">MengeGes</div>
<div class="a" style="left:1848px;top:763px;width:13px;height:26px;overflow:hidden"><div class="t" style="left:5px;top:6px;color:#2a63ad">Lager</div></div>
<div class="a" style="left:1467px;top:899px;width:15px;height:15px;border:1px solid #a6a6a6;background:#f9f9f9;"></div>
<svg class="a" style="left:1472.5px;top:903.5px" width="6" height="8" viewBox="0 0 6 8"><path d="M5 0.5 L5 7.5 L0.8 4 Z" fill="#5a5a5a"/></svg>
<div class="a" style="left:1483px;top:899px;width:309px;height:15px;border:1px solid #a6a6a6;background:#fff;"></div>
<div class="a" style="left:1844px;top:899px;width:15px;height:15px;border:1px solid #a6a6a6;background:#f9f9f9;"></div>
<svg class="a" style="left:1849.5px;top:903.5px" width="6" height="8" viewBox="0 0 6 8"><path d="M1 0.5 L1 7.5 L5.2 4 Z" fill="#5a5a5a"/></svg>
<div class="a" style="left:0px;top:917px;width:1864px;height:2px;background:#fff;"></div>
<div class="a" style="left:0px;top:919px;width:1865px;height:1px;background:#6a6a6a;"></div>
<div class="a" style="left:0px;top:920px;width:1865px;height:2px;background:#c8c8c8;"></div>
<div class="a" style="left:1864px;top:0px;width:1px;height:920px;background:#5a5a5a;"></div>
<div class="a" style="left:0;top:920px;width:1865px;height:2px;overflow:hidden"><div class="t" style="left:8px;top:-4px;color:#111">Projekte (alle) (20)</div></div>
<div class="a" style="left:1466px;top:54px;width:396px;height:1px;background:#c9d5e4"></div>
<div class="a" style="left:0px;top:460px;width:727px;height:1px;background:#c9d5e4"></div>
<div class="a" style="left:732px;top:460px;width:729px;height:1px;background:#c9d5e4"></div>
<div class="a" style="left:1466px;top:460px;width:396px;height:1px;background:#c9d5e4"></div>
<div class="a" style="left:0px;top:763px;width:727px;height:1px;background:#c9d5e4"></div>
<div class="a" style="left:732px;top:763px;width:729px;height:1px;background:#c9d5e4"></div>
<div class="a" style="left:1466px;top:763px;width:396px;height:1px;background:#c9d5e4"></div>
<div class="a" style="left:1463px;top:213px;width:1px;height:16px;background:#9aa6bd"></div>
<div class="a" style="left:1463px;top:232px;width:1px;height:16px;background:#9aa6bd"></div>
<div class="a" style="left:729px;top:568px;width:1px;height:16px;background:#9aa6bd"></div>
<div class="a" style="left:729px;top:587px;width:1px;height:16px;background:#9aa6bd"></div>
<div class="a" style="left:1463px;top:568px;width:1px;height:16px;background:#9aa6bd"></div>
<div class="a" style="left:1463px;top:587px;width:1px;height:16px;background:#9aa6bd"></div>
<div class="a" style="left:729px;top:810px;width:1px;height:16px;background:#9aa6bd"></div>
<div class="a" style="left:729px;top:829px;width:1px;height:16px;background:#9aa6bd"></div>
<div class="a" style="left:1463px;top:810px;width:1px;height:16px;background:#9aa6bd"></div>
<div class="a" style="left:1463px;top:829px;width:1px;height:16px;background:#9aa6bd"></div>
</body></html>
